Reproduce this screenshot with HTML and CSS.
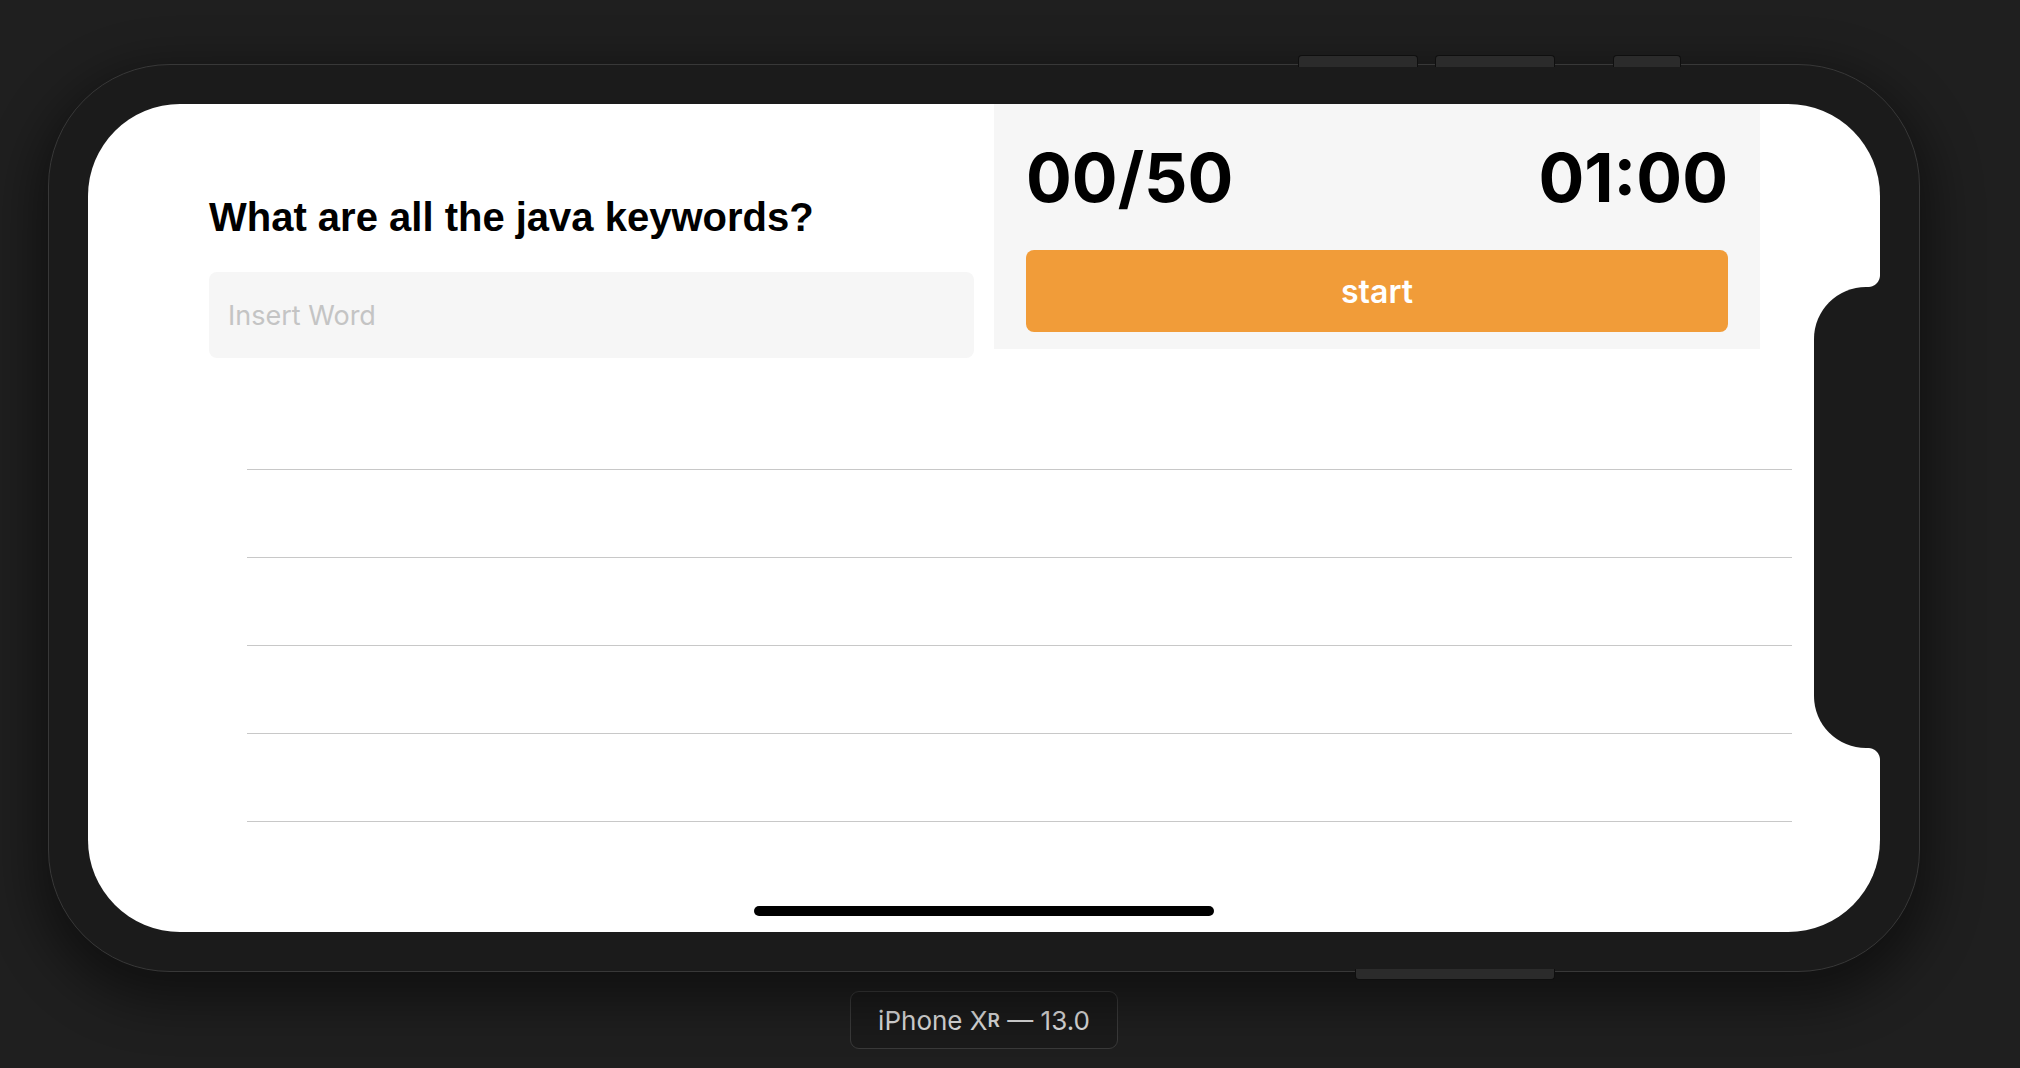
FILE: index.html
```html
<!DOCTYPE html>
<html lang="en">
<head>
<meta charset="utf-8">
<title>Java keywords quiz</title>
<link rel="stylesheet" href="styles.css">
</head>
<body>
<div class="stage">
  <div class="device">
    <span class="hw hw-top hw-1"></span>
    <span class="hw hw-top hw-2"></span>
    <span class="hw hw-top hw-3"></span>
    <span class="hw hw-bottom"></span>
    <div class="screen">
      <div class="top">
        <div class="ask">
          <h1 class="title">What are all the java keywords?</h1>
          <input class="word" type="text" placeholder="Insert Word">
        </div>
        <div class="stats">
          <div class="nums">
            <span class="score">00/50</span>
            <span class="timer">01:00</span>
          </div>
          <button class="start">start</button>
        </div>
      </div>
      <ul class="list">
        <li class="row"></li>
        <li class="row"></li>
        <li class="row"></li>
        <li class="row"></li>
        <li class="row"></li>
      </ul>
      <div class="notch"></div>
      <div class="home"></div>
    </div>
  </div>
  <div class="label">iPhone X<span class="sc">R</span> — 13.0</div>
</div>
</body>
</html>
```

FILE: styles.css
```css
html, body {
  margin: 0;
  padding: 0;
}
body {
  width: 2020px;
  height: 1068px;
  overflow: hidden;
  background: #1f1f1f;
  font-family: Inter, "Noto Sans", sans-serif;
}
.stage {
  width: 1872px;
  padding: 64px 0 0 48px;
  display: flex;
  flex-direction: column;
  align-items: center;
}
.device {
  position: relative;
  box-sizing: border-box;
  width: 1872px;
  height: 908px;
  padding: 39px;
  background: #1b1b1b;
  border: 1px solid #383838;
  border-radius: 122px;
  box-shadow: 0 18px 50px 12px rgba(0, 0, 0, 0.45);
}
.hw {
  position: absolute;
  box-sizing: border-box;
  background: #2b2b2b;
  border: 1px solid #0f0f0f;
}
.hw-top {
  top: -10px;
  height: 12px;
  border-radius: 4px 4px 0 0;
  border-bottom: none;
}
.hw-1 { left: 1249px; width: 120px; }
.hw-2 { left: 1386px; width: 120px; }
.hw-3 { left: 1564px; width: 68px; }
.hw-bottom {
  left: 1306px;
  width: 200px;
  bottom: -9px;
  height: 11px;
  border-top: none;
  border-radius: 0 0 4px 4px;
}
.screen {
  position: relative;
  width: 1792px;
  height: 828px;
  background: #ffffff;
  border-radius: 92px;
  overflow: hidden;
}
.top {
  display: flex;
  align-items: flex-start;
  gap: 20px;
  padding: 0 120px 0 121px;
}
.ask {
  width: 765px;
  padding-top: 91px;
}
.title {
  margin: 0;
  font-family: "Liberation Sans", Arial, sans-serif;
  font-weight: 700;
  font-size: 40px;
  line-height: 45px;
  color: #000;
}
.word {
  display: block;
  box-sizing: border-box;
  width: 765px;
  height: 86px;
  margin-top: 32px;
  padding: 0 0 0 19px;
  border: none;
  outline: none;
  border-radius: 8px;
  background: #f6f6f6;
  font-family: Inter, "Noto Sans", sans-serif;
  font-size: 27px;
  color: #222;
}
.word::placeholder {
  color: #c4c4c4;
}
.stats {
  width: 766px;
  box-sizing: border-box;
  padding: 40px 32px 17px;
  background: #f6f6f6;
}
.nums {
  display: flex;
  justify-content: space-between;
  font-family: Inter, "Noto Sans", sans-serif;
  font-weight: 700;
  font-size: 68px;
  line-height: 67px;
  color: #000;
}
.score, .timer {
  display: block;
}
.start {
  display: block;
  width: 100%;
  height: 82px;
  margin-top: 39px;
  border: none;
  border-radius: 8px;
  background: #f19c39;
  color: #ffffff;
  font-family: Inter, "Noto Sans", sans-serif;
  font-weight: 600;
  font-size: 32px;
  padding: 0;
}
.list {
  list-style: none;
  margin: 24px 0 0;
  padding: 0 88px 0 159px;
}
.row {
  height: 87px;
  border-bottom: 1px solid #c8c8c8;
}
.notch {
  position: absolute;
  right: 0;
  top: 183px;
  width: 66px;
  height: 461px;
  background: #1b1b1b;
  border-radius: 52px 0 0 52px;
}
.notch::before,
.notch::after {
  content: "";
  position: absolute;
  right: 0;
  width: 12px;
  height: 12px;
}
.notch::before {
  top: -12px;
  background: radial-gradient(circle at 0 0, transparent 11.5px, #1b1b1b 12.5px);
}
.notch::after {
  bottom: -12px;
  background: radial-gradient(circle at 0 100%, transparent 11.5px, #1b1b1b 12.5px);
}
.home {
  position: absolute;
  left: 666px;
  bottom: 16px;
  width: 460px;
  height: 10px;
  border-radius: 5px;
  background: #000;
}
.label {
  box-sizing: border-box;
  margin-top: 19px;
  width: 268px;
  height: 58px;
  display: flex;
  align-items: center;
  justify-content: center;
  border: 1.5px solid #3a3a3a;
  border-radius: 9px;
  background: #1b1b1b;
  color: #dcdcdc;
  font-family: Inter, "Noto Sans", sans-serif;
  font-size: 26px;
  white-space: pre;
}
.sc {
  font-size: 19px;
  font-weight: 600;
}
```
